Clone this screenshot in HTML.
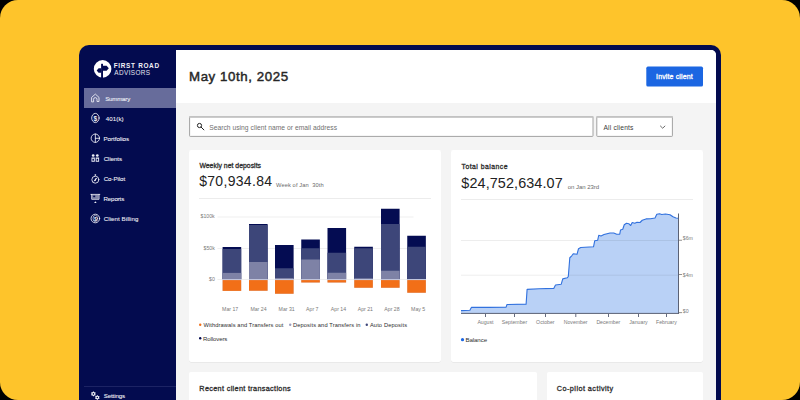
<!DOCTYPE html>
<html><head><meta charset='utf-8'><style>
html,body{margin:0;padding:0;background:#000;width:800px;height:400px;overflow:hidden}
.t{position:absolute;font-family:"Liberation Sans",sans-serif;white-space:pre}
.bg{position:absolute;left:0;top:0;width:800px;height:400px;background:#fec42b;border-radius:18px}
.win{position:absolute;left:79px;top:45px;width:642px;height:380px;background:#030b4f;border-radius:10px}
.main{position:absolute;left:175.5px;top:50px;width:540.75px;height:360px;background:#f4f4f4;border-top-right-radius:5px;overflow:hidden}
.hdr{position:absolute;left:0;top:0;width:100%;height:53px;background:#fff}
.abs{position:absolute}
svg{position:absolute;left:0;top:0}
</style></head><body>
<div class='bg'></div>
<div class='win'></div>
<div class='main'><div class='hdr'></div></div>
<!-- active nav -->
<div class='abs' style='left:83.8px;top:87.9px;width:92px;height:19.8px;background:#676c9b'></div>
<!-- sidebar divider -->
<div class='abs' style='left:84px;top:386.2px;width:92px;height:0.8px;background:#1c2364'></div>
<!-- invite button -->

<!-- search -->


<!-- cards -->
<div class='abs' style='left:189px;top:150px;width:252px;height:212.3px;background:#fff;border-radius:2px;box-shadow:0 0.6px 0.6px rgba(0,0,0,0.09)'></div>
<div class='abs' style='left:451px;top:150px;width:252px;height:212.3px;background:#fff;border-radius:2px;box-shadow:0 0.6px 0.6px rgba(0,0,0,0.09)'></div>
<div class='abs' style='left:189px;top:372.3px;width:348.1px;height:60px;background:#fff;border-radius:2px'></div>
<div class='abs' style='left:547px;top:372.3px;width:156px;height:60px;background:#fff;border-radius:2px'></div>
<!-- dividers in cards -->
<div class='abs' style='left:199px;top:197.6px;width:232px;height:0.8px;background:#ececec'></div>
<div class='abs' style='left:461px;top:198.6px;width:232px;height:0.8px;background:#ececec'></div>
<svg width='800' height='400' viewBox='0 0 800 400'>
<rect x='189.6' y='116.9' width='403.4' height='19.5' rx='0.6' fill='#fff' stroke='#a2a2a2' stroke-width='1'/><rect x='189.1' y='116.1' width='404.4' height='1.5' fill='#c2c2c2'/>
<rect x='596.8' y='116.9' width='75.6' height='19.5' rx='0.6' fill='#fff' stroke='#a2a2a2' stroke-width='1'/><rect x='596.3' y='116.1' width='76.6' height='1.5' fill='#c2c2c2'/>
<rect x='646.3' y='66.6' width='56.7' height='19.9' rx='1.6' fill='#1b66e2'/>
<rect x='217.5' y='216.5' width='196' height='1' fill='#efefef'/>
<rect x='217.5' y='248.0' width='196' height='1' fill='#efefef'/>
<rect x='217.5' y='279.0' width='196' height='1' fill='#efefef'/>
<rect x='222.6' y='247' width='18.6' height='32.19999999999999' fill='#040c52'/>
<rect x='222.6' y='249' width='18.6' height='30.19999999999999' fill='#3d4679'/>
<rect x='222.6' y='272.9' width='18.6' height='6.300000000000011' fill='#7e82a6'/>
<rect x='222.6' y='279.2' width='18.6' height='11.699999999999989' fill='#c9cde3'/>
<rect x='222.6' y='280.09999999999997' width='18.6' height='10.799999999999988' fill='#f26f18'/>
<rect x='249' y='224' width='18.6' height='55.19999999999999' fill='#040c52'/>
<rect x='249' y='225' width='18.6' height='54.19999999999999' fill='#3d4679'/>
<rect x='249' y='262' width='18.6' height='17.19999999999999' fill='#7e82a6'/>
<rect x='249' y='279.2' width='18.6' height='11.550000000000011' fill='#c9cde3'/>
<rect x='249' y='280.09999999999997' width='18.6' height='10.650000000000011' fill='#f26f18'/>
<rect x='275' y='245' width='18.6' height='34.19999999999999' fill='#040c52'/>
<rect x='275' y='268.25' width='18.6' height='10.949999999999989' fill='#3d4679'/>
<rect x='275' y='278' width='18.6' height='1.1999999999999886' fill='#7e82a6'/>
<rect x='275' y='279.2' width='18.6' height='14.550000000000011' fill='#c9cde3'/>
<rect x='275' y='280.09999999999997' width='18.6' height='13.650000000000011' fill='#f26f18'/>
<rect x='301.25' y='239.5' width='18.6' height='39.69999999999999' fill='#040c52'/>
<rect x='301.25' y='248.25' width='18.6' height='30.94999999999999' fill='#3d4679'/>
<rect x='301.25' y='259.5' width='18.6' height='19.69999999999999' fill='#7e82a6'/>
<rect x='301.25' y='279.2' width='18.6' height='3.3000000000000114' fill='#c9cde3'/>
<rect x='301.25' y='280.09999999999997' width='18.6' height='2.4000000000000115' fill='#f26f18'/>
<rect x='327.5' y='228' width='18.6' height='51.19999999999999' fill='#040c52'/>
<rect x='327.5' y='252.75' width='18.6' height='26.44999999999999' fill='#3d4679'/>
<rect x='327.5' y='272.75' width='18.6' height='6.449999999999989' fill='#7e82a6'/>
<rect x='327.5' y='279.2' width='18.6' height='3.3000000000000114' fill='#c9cde3'/>
<rect x='327.5' y='280.09999999999997' width='18.6' height='2.4000000000000115' fill='#f26f18'/>
<rect x='354.25' y='246.75' width='18.6' height='32.44999999999999' fill='#040c52'/>
<rect x='354.25' y='248.25' width='18.6' height='30.94999999999999' fill='#3d4679'/>
<rect x='354.25' y='278.25' width='18.6' height='0.9499999999999886' fill='#7e82a6'/>
<rect x='354.25' y='279.2' width='18.6' height='8.550000000000011' fill='#c9cde3'/>
<rect x='354.25' y='280.09999999999997' width='18.6' height='7.650000000000011' fill='#f26f18'/>
<rect x='381' y='208.75' width='18.6' height='70.44999999999999' fill='#040c52'/>
<rect x='381' y='224' width='18.6' height='55.19999999999999' fill='#3d4679'/>
<rect x='381' y='270.75' width='18.6' height='8.449999999999989' fill='#7e82a6'/>
<rect x='381' y='279.2' width='18.6' height='8.550000000000011' fill='#c9cde3'/>
<rect x='381' y='280.09999999999997' width='18.6' height='7.650000000000011' fill='#f26f18'/>
<rect x='407.25' y='235.75' width='18.6' height='43.44999999999999' fill='#040c52'/>
<rect x='407.25' y='246.75' width='18.6' height='32.44999999999999' fill='#3d4679'/>
<rect x='407.25' y='279' width='18.6' height='0.19999999999998863' fill='#7e82a6'/>
<rect x='407.25' y='279.2' width='18.6' height='13.550000000000011' fill='#c9cde3'/>
<rect x='407.25' y='280.09999999999997' width='18.6' height='12.650000000000011' fill='#f26f18'/>
<polygon points='461,313.4 461,310.6 469.9,310.25 471.5,307.25 489,307.4 506.1,307.1 507,304.5 526.1,304.1 527.1,289.4 539,288.8 553.75,288.4 555.5,285 561.25,284.2 562.75,278.9 567.25,277.8 568.3,276.5 569.8,257.75 571.75,255.8 573.25,253.7 575.2,254 577,254.3 578.5,248.75 580.75,247.5 593.5,246.8 594.7,240.8 597.7,240.2 598.75,235.25 601,236 604,234.5 610,233 613.75,233 616.75,234.2 619.75,234.2 620.5,230 622.75,229.25 624.25,224.75 626.5,223.25 628.75,223.7 630.7,225.5 632.2,222.5 634.75,223.25 637,222.2 640,222.5 642.25,220.25 646,218.9 650.5,218.75 655,218 656.8,214.25 659.5,213.8 661.75,214.5 665.5,214 670,214.7 673,216.8 676,218 678.2,218.3 678.5,313.4' fill='#b9d1f6'/>
<rect x='461' y='240.0' width='217.5' height='1' fill='#000' fill-opacity='0.07'/>
<rect x='461' y='274.7' width='217.5' height='1' fill='#000' fill-opacity='0.07'/>
<polyline points='461,310.6 469.9,310.25 471.5,307.25 489,307.4 506.1,307.1 507,304.5 526.1,304.1 527.1,289.4 539,288.8 553.75,288.4 555.5,285 561.25,284.2 562.75,278.9 567.25,277.8 568.3,276.5 569.8,257.75 571.75,255.8 573.25,253.7 575.2,254 577,254.3 578.5,248.75 580.75,247.5 593.5,246.8 594.7,240.8 597.7,240.2 598.75,235.25 601,236 604,234.5 610,233 613.75,233 616.75,234.2 619.75,234.2 620.5,230 622.75,229.25 624.25,224.75 626.5,223.25 628.75,223.7 630.7,225.5 632.2,222.5 634.75,223.25 637,222.2 640,222.5 642.25,220.25 646,218.9 650.5,218.75 655,218 656.8,214.25 659.5,213.8 661.75,214.5 665.5,214 670,214.7 673,216.8 676,218 678.2,218.3' fill='none' stroke='#3171de' stroke-width='1.1' stroke-linejoin='round'/>
<rect x='461' y='312.9' width='218' height='1' fill='#5b6275'/><rect x='678' y='213.5' width='1' height='100.4' fill='#5b6275'/>
<rect x='485.0' y='313.4' width='1' height='3.6' fill='#666c80'/>
<rect x='514.0' y='313.4' width='1' height='3.6' fill='#666c80'/>
<rect x='545.0' y='313.4' width='1' height='3.6' fill='#666c80'/>
<rect x='575.3' y='313.4' width='1' height='3.6' fill='#666c80'/>
<rect x='608.0' y='313.4' width='1' height='3.6' fill='#666c80'/>
<rect x='638.0' y='313.4' width='1' height='3.6' fill='#666c80'/>
<rect x='666.0' y='313.4' width='1' height='3.6' fill='#666c80'/>
<rect x='679' y='239.8' width='3' height='0.8' fill='#777'/>
<rect x='679' y='274.0' width='3' height='0.8' fill='#777'/>
<rect x='679' y='312.3' width='3' height='0.8' fill='#777'/>
<circle cx='200.2' cy='324.8' r='1.2' fill='#f26f18'/>
<circle cx='290.2' cy='324.8' r='1.2' fill='#9a9ec0'/>
<circle cx='366.8' cy='324.8' r='1.2' fill='#3d4679'/>
<circle cx='200.2' cy='338.2' r='1.2' fill='#040c52'/>
<circle cx='462.5' cy='339.7' r='1.6' fill='#1b66e2'/>
</svg>
<!-- ICONS -->
<svg width='800' height='400' viewBox='0 0 800 400'>
<g id="logo">
<circle cx="102.6" cy="68.9" r="8.8" fill="#fff"/>
<rect x="101.1" y="63.8" width="1.9" height="14.5" fill="#030b4f"/>
<polygon points="103,65.7 106.6,65.7 108.8,68.2 106.6,70.65 103,70.65" fill="#030b4f"/>
<polygon points="101.1,68.2 98.6,68.2 96.7,70.5 98.6,72.85 101.1,72.85" fill="#030b4f"/>
</g>
<g fill="none" stroke="#eef0f7" stroke-width="0.85" stroke-linejoin="round" stroke-linecap="round">
<!-- house -->
<path d="M91.6,101.5 V97.4 L95.35,94.1 L99,97.4 V101.5 H97 V99.3 A1.7,1.7 0 0 0 93.6,99.3 V101.5 Z"/>
<!-- 401k -->
<ellipse cx="95.4" cy="118" rx="3.7" ry="4.6"/>
<!-- portfolios -->
<circle cx="95.35" cy="138.2" r="4.2"/>
<path d="M95.35,134 V142.4 M95.35,138.3 H99.5"/>
<!-- co-pilot -->
<circle cx="95.35" cy="179.7" r="3.5"/>
<path d="M94.1,181 L96.6,178.4"/>
<!-- reports -->
<path d="M90.9,194.4 H99.8 M91.7,194.4 V199.3 H99 V194.4"/>
<rect x="92.2" y="194.9" width="6.3" height="3.9" fill="#eef0f7" fill-opacity="0.55" stroke="none"/><rect x="93.2" y="195.6" width="2" height="1.6" fill="#030b4f" stroke="none"/>
<!-- billing -->
<circle cx="95.35" cy="218.5" r="4.3"/>
<ellipse cx="95.35" cy="218.5" rx="2.3" ry="3.2" stroke-width="0.6"/>
</g>
<g fill="#eef0f7">
<!-- 401k $ -->
<text x="95.4" y="120.6" font-family="Liberation Sans" font-size="6.6" text-anchor="middle" font-weight="700">$</text>
<!-- billing $ -->
<text x="95.35" y="220.5" font-family="Liberation Sans" font-size="5.2" text-anchor="middle" font-weight="700">$</text>
<!-- clients -->
<circle cx="93.2" cy="155.5" r="1.35"/>
<circle cx="97.3" cy="155.5" r="1.35"/>
<path d="M91.5,157.6 H94.8 V161.8 H91.5 Z M92.4,160.7 H93.9 V158.7 H92.4 Z" fill-rule="evenodd"/>
<path d="M95.7,157.6 H99.1 V161.8 H95.7 Z M96.6,160.7 H98.2 V158.7 H96.6 Z" fill-rule="evenodd"/>
<!-- co-pilot knob -->
<rect x="94.5" y="174.2" width="1.7" height="1.5" rx="0.6"/>
<path d="M94.3,181.2 L95,178.5 L96.6,178.2 L95.8,180.8 Z"/>
<!-- reports stand -->
<polygon points="95.35,201.2 96.6,202.9 94.1,202.9"/>
</g>
<!-- settings gears -->
<polygon points="93.40,391.20 94.33,392.30 95.74,392.55 95.25,393.90 95.74,395.25 94.33,395.50 93.40,396.60 92.48,395.50 91.06,395.25 91.55,393.90 91.06,392.55 92.48,392.30" fill="#eef0f7"/><circle cx="93.4" cy="393.9" r="0.8" fill="#030b4f"/>
<polygon points="97.30,394.90 98.20,395.94 99.55,396.20 99.10,397.50 99.55,398.80 98.20,399.06 97.30,400.10 96.40,399.06 95.05,398.80 95.50,397.50 95.05,396.20 96.40,395.94" fill="#eef0f7"/><circle cx="97.3" cy="397.5" r="0.75" fill="#030b4f"/>
<!-- search icon -->
<g fill="none" stroke="#222" stroke-width="1">
<circle cx="199.5" cy="125.5" r="2.1"/>
<path d="M201.1,127.1 L203.9,129.9" stroke-linecap="round"/>
</g>
<!-- chevron -->
<path d="M660.2,125.8 L662.7,128.2 L665.2,125.8" fill="none" stroke="#444" stroke-width="0.8"/>

</svg>
<div class='t' style='left:113.75px;top:62.56px;font-size:6.42px;line-height:6.42px;font-weight:700;letter-spacing:0.683px;color:#f2f2f7'>FIRST ROAD</div>
<div class='t' style='left:114.30px;top:69.96px;font-size:6.42px;line-height:6.42px;font-weight:400;letter-spacing:0.386px;color:#e6e7ef'>ADVISORS</div>
<div class='t' style='left:105.15px;top:95.70px;font-size:6.15px;line-height:6.15px;font-weight:400;letter-spacing:-0.200px;color:#f0f1f7;-webkit-text-stroke:0.08px #f0f1f7'>Summary</div>
<div class='t' style='left:105.70px;top:115.80px;font-size:6.15px;line-height:6.15px;font-weight:400;letter-spacing:0.100px;color:#f0f1f7;-webkit-text-stroke:0.08px #f0f1f7'>401(k)</div>
<div class='t' style='left:103.50px;top:135.80px;font-size:6.15px;line-height:6.15px;font-weight:400;letter-spacing:0.000px;color:#f0f1f7;-webkit-text-stroke:0.08px #f0f1f7'>Portfolios</div>
<div class='t' style='left:103.75px;top:155.80px;font-size:6.15px;line-height:6.15px;font-weight:400;letter-spacing:-0.083px;color:#f0f1f7;-webkit-text-stroke:0.08px #f0f1f7'>Clients</div>
<div class='t' style='left:103.75px;top:175.80px;font-size:6.15px;line-height:6.15px;font-weight:400;letter-spacing:-0.071px;color:#f0f1f7;-webkit-text-stroke:0.08px #f0f1f7'>Co-Pilot</div>
<div class='t' style='left:103.50px;top:195.80px;font-size:6.15px;line-height:6.15px;font-weight:400;letter-spacing:-0.125px;color:#f0f1f7;-webkit-text-stroke:0.08px #f0f1f7'>Reports</div>
<div class='t' style='left:103.75px;top:215.80px;font-size:6.15px;line-height:6.15px;font-weight:400;letter-spacing:0.058px;color:#f0f1f7;-webkit-text-stroke:0.08px #f0f1f7'>Client Billing</div>
<div class='t' style='left:103.65px;top:392.80px;font-size:6.15px;line-height:6.15px;font-weight:400;letter-spacing:-0.093px;color:#f0f1f7;-webkit-text-stroke:0.08px #f0f1f7'>Settings</div>
<div class='t' style='left:189.00px;top:69.97px;font-size:13.27px;line-height:13.27px;font-weight:400;letter-spacing:0.585px;color:#262626;-webkit-text-stroke:0.45px #262626'>May 10th, 2025</div>
<div class='t' style='left:656.10px;top:73.09px;font-size:6.98px;line-height:6.98px;font-weight:400;letter-spacing:0.142px;color:#ffffff;-webkit-text-stroke:0.3px #ffffff'>Invite client</div>
<div class='t' style='left:209.15px;top:125.03px;font-size:6.70px;line-height:6.70px;font-weight:400;letter-spacing:0.037px;color:#6f6f6f'>Search using client name or email address</div>
<div class='t' style='left:603.40px;top:125.03px;font-size:6.70px;line-height:6.70px;font-weight:400;letter-spacing:0.180px;color:#3a3a3a'>All clients</div>
<div class='t' style='left:199.45px;top:163.21px;font-size:6.84px;line-height:6.84px;font-weight:400;letter-spacing:0.031px;color:#2e2e2e;-webkit-text-stroke:0.3px #2e2e2e'>Weekly net deposits</div>
<div class='t' style='left:199.15px;top:175.18px;font-size:13.97px;line-height:13.97px;font-weight:400;letter-spacing:0.328px;color:#222222'>$70,934.84</div>
<div class='t' style='left:276.00px;top:183.15px;font-size:5.73px;line-height:5.73px;font-weight:400;letter-spacing:0.103px;color:#6a6a6a'>Week of Jan  30th</div>
<div class='t' style='left:461.50px;top:163.91px;font-size:6.84px;line-height:6.84px;font-weight:400;letter-spacing:0.479px;color:#2e2e2e;-webkit-text-stroke:0.3px #2e2e2e'>Total balance</div>
<div class='t' style='left:461.35px;top:176.42px;font-size:14.39px;line-height:14.39px;font-weight:400;letter-spacing:0.108px;color:#222222'>$24,752,634.07</div>
<div class='t' style='left:567.65px;top:183.52px;font-size:6.01px;line-height:6.01px;font-weight:400;letter-spacing:-0.015px;color:#6a6a6a'>on Jan 23rd</div>
<div class='t' style='left:203.50px;top:323.45px;font-size:5.73px;line-height:5.73px;font-weight:400;letter-spacing:0.095px;color:#2e2e2e'>Withdrawals and Transfers out</div>
<div class='t' style='left:293.00px;top:323.45px;font-size:5.73px;line-height:5.73px;font-weight:400;letter-spacing:0.108px;color:#2e2e2e'>Deposits and Transfers in</div>
<div class='t' style='left:369.90px;top:323.45px;font-size:5.73px;line-height:5.73px;font-weight:400;letter-spacing:0.133px;color:#2e2e2e'>Auto Deposits</div>
<div class='t' style='left:203.00px;top:335.62px;font-size:6.01px;line-height:6.01px;font-weight:400;letter-spacing:-0.087px;color:#2e2e2e'>Rollovers</div>
<div class='t' style='left:465.40px;top:337.30px;font-size:6.15px;line-height:6.15px;font-weight:400;letter-spacing:-0.083px;color:#2e2e2e'>Balance</div>
<div class='t' style='left:199.35px;top:385.05px;font-size:7.26px;line-height:7.26px;font-weight:400;letter-spacing:0.334px;color:#2e2e2e;-webkit-text-stroke:0.3px #2e2e2e'>Recent client transactions</div>
<div class='t' style='left:556.85px;top:385.05px;font-size:7.26px;line-height:7.26px;font-weight:400;letter-spacing:0.447px;color:#2e2e2e;-webkit-text-stroke:0.3px #2e2e2e'>Co-pilot activity</div>
<div class='t' style='left:222.07px;top:307.20px;font-size:5.20px;line-height:5.20px;font-weight:400;letter-spacing:0.000px;color:#7a7a7a'>Mar 17</div>
<div class='t' style='left:250.38px;top:307.20px;font-size:5.20px;line-height:5.20px;font-weight:400;letter-spacing:0.000px;color:#7a7a7a'>Mar 24</div>
<div class='t' style='left:278.57px;top:307.20px;font-size:5.20px;line-height:5.20px;font-weight:400;letter-spacing:0.000px;color:#7a7a7a'>Mar 31</div>
<div class='t' style='left:306.07px;top:307.20px;font-size:5.20px;line-height:5.20px;font-weight:400;letter-spacing:0.000px;color:#7a7a7a'>Apr 7</div>
<div class='t' style='left:330.82px;top:307.20px;font-size:5.20px;line-height:5.20px;font-weight:400;letter-spacing:0.000px;color:#7a7a7a'>Apr 14</div>
<div class='t' style='left:357.70px;top:307.20px;font-size:5.20px;line-height:5.20px;font-weight:400;letter-spacing:0.000px;color:#7a7a7a'>Apr 21</div>
<div class='t' style='left:384.32px;top:307.20px;font-size:5.20px;line-height:5.20px;font-weight:400;letter-spacing:0.000px;color:#7a7a7a'>Apr 28</div>
<div class='t' style='left:411.07px;top:307.20px;font-size:5.20px;line-height:5.20px;font-weight:400;letter-spacing:0.000px;color:#7a7a7a'>May 5</div>
<div class='t' style='left:200.55px;top:213.90px;font-size:5.20px;line-height:5.20px;font-weight:400;letter-spacing:0.000px;color:#7a7a7a'>$100k</div>
<div class='t' style='left:203.55px;top:245.50px;font-size:5.20px;line-height:5.20px;font-weight:400;letter-spacing:0.000px;color:#7a7a7a'>$50k</div>
<div class='t' style='left:209.05px;top:276.80px;font-size:5.20px;line-height:5.20px;font-weight:400;letter-spacing:0.000px;color:#7a7a7a'>$0</div>
<div class='t' style='left:477.38px;top:320.10px;font-size:5.20px;line-height:5.20px;font-weight:400;letter-spacing:0.000px;color:#7a7a7a'>August</div>
<div class='t' style='left:501.75px;top:320.10px;font-size:5.20px;line-height:5.20px;font-weight:400;letter-spacing:0.000px;color:#7a7a7a'>September</div>
<div class='t' style='left:536.12px;top:320.10px;font-size:5.20px;line-height:5.20px;font-weight:400;letter-spacing:0.000px;color:#7a7a7a'>October</div>
<div class='t' style='left:563.67px;top:320.10px;font-size:5.20px;line-height:5.20px;font-weight:400;letter-spacing:0.000px;color:#7a7a7a'>November</div>
<div class='t' style='left:596.38px;top:320.10px;font-size:5.20px;line-height:5.20px;font-weight:400;letter-spacing:0.000px;color:#7a7a7a'>December</div>
<div class='t' style='left:629.25px;top:320.10px;font-size:5.20px;line-height:5.20px;font-weight:400;letter-spacing:0.000px;color:#7a7a7a'>January</div>
<div class='t' style='left:656.00px;top:320.10px;font-size:5.20px;line-height:5.20px;font-weight:400;letter-spacing:0.000px;color:#7a7a7a'>February</div>
<div class='t' style='left:682.80px;top:235.60px;font-size:5.20px;line-height:5.20px;font-weight:400;letter-spacing:0.000px;color:#7a7a7a'>$6m</div>
<div class='t' style='left:682.80px;top:273.30px;font-size:5.20px;line-height:5.20px;font-weight:400;letter-spacing:0.000px;color:#7a7a7a'>$4m</div>
<div class='t' style='left:682.80px;top:308.70px;font-size:5.20px;line-height:5.20px;font-weight:400;letter-spacing:0.000px;color:#7a7a7a'>$0</div>
</body></html>
